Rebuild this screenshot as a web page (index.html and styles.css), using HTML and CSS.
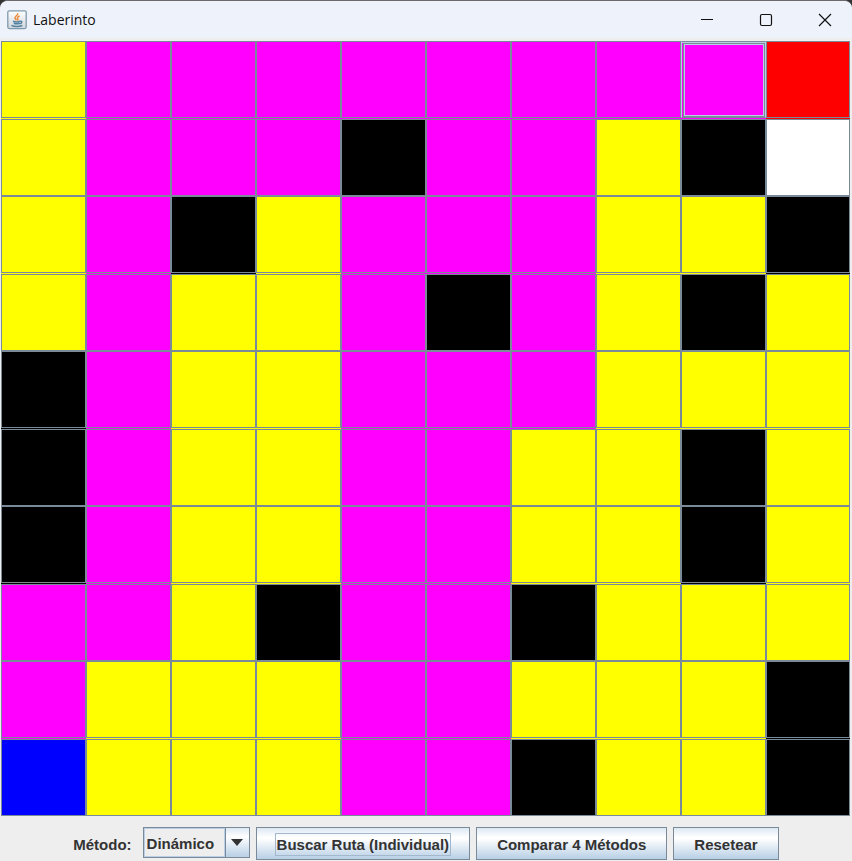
FILE: index.html
```html
<!DOCTYPE html>
<html lang="es">
<head>
<meta charset="utf-8">
<title>Laberinto</title>
<link rel="stylesheet" href="styles.css">
</head>
<body>
<div class="window">
  <header class="titlebar">
    <svg class="app-icon" width="20" height="20" viewBox="0 0 20 20" aria-hidden="true">
      <defs><linearGradient id="tile" x1="0" y1="0" x2="0" y2="1"><stop offset="0" stop-color="#fff"/><stop offset="1" stop-color="#cfd6dc"/></linearGradient></defs>
      <rect x="0.8" y="0.8" width="18.4" height="17.8" rx="1.5" fill="url(#tile)" stroke="#7f99ad" stroke-width="1.3"/>
      <path d="M10.6 3.2c1.2 2-3.2 3-2.6 5 .2.8 1.2 1.3 1.5 2.1M12.6 6c-1.8.9-2.8 1.8-1.8 3 .4.6.2 1-.3 1.5" fill="none" stroke="#ec8b3c" stroke-width="1.5"/>
      <path d="M6 11.3c2 .8 5.5.7 7.2 0M6.8 13.2c1.8.7 4.2.6 5.8 0M13.3 11.3c2.2-.5 1.9 2-.5 2.5M4.5 15.3c2.5 1.5 8.5 1.5 10.8 0" fill="none" stroke="#5382a1" stroke-width="1.5"/>
    </svg>
    <h1 class="title">Laberinto</h1>
    <div class="controls">
      <button class="control" aria-label="Minimizar"><svg width="14" height="14"><path d="M1 6.5h12"/></svg></button>
      <button class="control" aria-label="Maximizar"><svg width="14" height="14"><rect x="1.5" y="1.5" width="11" height="11" rx="1.5"/></svg></button>
      <button class="control" aria-label="Cerrar"><svg width="14" height="14"><path d="M1 1l12 12M13 1L1 13"/></svg></button>
    </div>
  </header>
  <main class="maze" id="maze"></main>
  <footer class="toolbar">
    <label class="method-label" for="method">Método:</label>
    <div class="combo">
      <select id="method"><option>Dinámico</option></select>
      <span class="combo-arrow"><svg width="12" height="7"><path d="M0 0h12L6 7z"/></svg></span>
    </div>
    <button class="action"><span class="focus-text">Buscar Ruta (Individual)</span></button>
    <button class="action">Comparar 4 Métodos</button>
    <button class="action">Resetear</button>
  </footer>
</div>
<script src="maze.js"></script>
</body>
</html>
```
FILE: styles.css
```css
* { box-sizing: border-box; }

body {
  margin: 0;
  background: #333;
  font-family: "Liberation Sans", Arial, sans-serif;
}

.window {
  display: flex;
  flex-direction: column;
  height: 100vh;
  background: #eee;
  border-top: 1px solid #6c6a6e;
  border-radius: 8px 8px 0 0;
  overflow: hidden;
}

.titlebar {
  display: flex;
  align-items: center;
  flex: none;
  height: 37px;
  margin-bottom: 3px;
  padding-left: 7px;
  background: #eef3fb;
}

.title {
  margin: 0 0 0 6px;
  font: 400 14px/20px "Open Sans", "Noto Sans", sans-serif;
  color: #111;
}

.controls {
  display: flex;
  gap: 5px;
  margin-left: auto;
}

.control {
  display: flex;
  align-items: center;
  justify-content: center;
  width: 54px;
  height: 36px;
  padding: 0;
  border: 0;
  background: none;
}

.control svg {
  fill: none;
  stroke: #111;
  stroke-width: 1.2;
}

.maze {
  display: grid;
  flex: 1;
  grid-template-columns: repeat(10, 1fr);
  grid-template-rows: repeat(5, 78fr 77fr);
  padding: 0 1px;
}

.cell {
  position: relative;
  padding: 0;
  border: 0;
}

.cell::before {
  content: "";
  position: absolute;
  inset: 0;
  border: 1px solid #7a8a99;
}

.cell.tall::before { bottom: 1px; }
.cell:nth-child(10n) { margin-right: 1px; }

.visited { background: #ff0; }
.path { background: #f0f; }
.wall { background: #000; }
.start { background: #00f; }
.goal { background: #f00; }
.free { background: #fff; }

.cell.focused::before {
  border-color: #7a8a99 #b8cfe5;
  box-shadow: inset 0 1px #b8cfe5;
}

.focused::after {
  content: "";
  position: absolute;
  inset: 2px 1px 2px 2px;
  border: 1px solid #7a8a99;
  box-shadow: inset 0 0 0 1px #b8cfe5;
}

.toolbar {
  display: flex;
  flex: none;
  align-items: flex-start;
  justify-content: center;
  gap: 6px;
  height: 45px;
  padding-top: 11px;
  font-size: 15px;
  font-weight: 700;
  color: #333;
}

.method-label {
  margin-right: 5px;
  line-height: 35px;
}

.combo {
  display: flex;
  width: 107px;
  height: 31px;
  border: 1px solid #7a8a99;
}

.combo select {
  appearance: none;
  flex: 1;
  min-width: 0;
  padding: 2px 2px 0;
  border: 1px solid #b8cfe5;
  border-radius: 0;
  background: #eee;
  font: inherit;
  color: inherit;
}

.combo-arrow {
  display: flex;
  align-items: center;
  justify-content: center;
  width: 24px;
  border-left: 1px solid #7a8a99;
  background: linear-gradient(#dde8f3, #fff 30%, #b8cfe5);
}

.combo-arrow path { fill: #333; }

.action {
  height: 33px;
  padding: 2px 20px 0;
  border: 1px solid #7a8a99;
  background: linear-gradient(#dde8f3, #fff 30%, #fff 34%, #b8cfe5);
  font: inherit;
  color: inherit;
}

.focus-text {
  display: block;
  margin: 0 -2px;
  padding: 2px 1px;
  border: 1px solid #a3b8cc;
}
```
FILE: maze.js
```js
// One letter per cell: v visited, p path, w wall, s start, g goal, f free.
const rows = [
  "vppppppppg",
  "vpppwppvwf",
  "vpwvpppvvw",
  "vpvvpwpvwv",
  "wpvvpppvvv",
  "wpvvppvvwv",
  "wpvvppvvwv",
  "ppvwppwvvv",
  "pvvvppvvvw",
  "svvvppwvvw"
];
const kinds = { v: "visited", p: "path", w: "wall", s: "start", g: "goal", f: "free" };
const maze = document.getElementById("maze");

rows.forEach((row, y) => {
  [...row].forEach((code, x) => {
    const cell = document.createElement("button");
    cell.className = "cell " + kinds[code];
    if (y % 2 === 0) cell.classList.add("tall");
    if (y === 0 && x === 8) cell.classList.add("focused");
    cell.setAttribute("aria-label", `Celda ${y + 1}, ${x + 1}`);
    maze.append(cell);
  });
});
```
